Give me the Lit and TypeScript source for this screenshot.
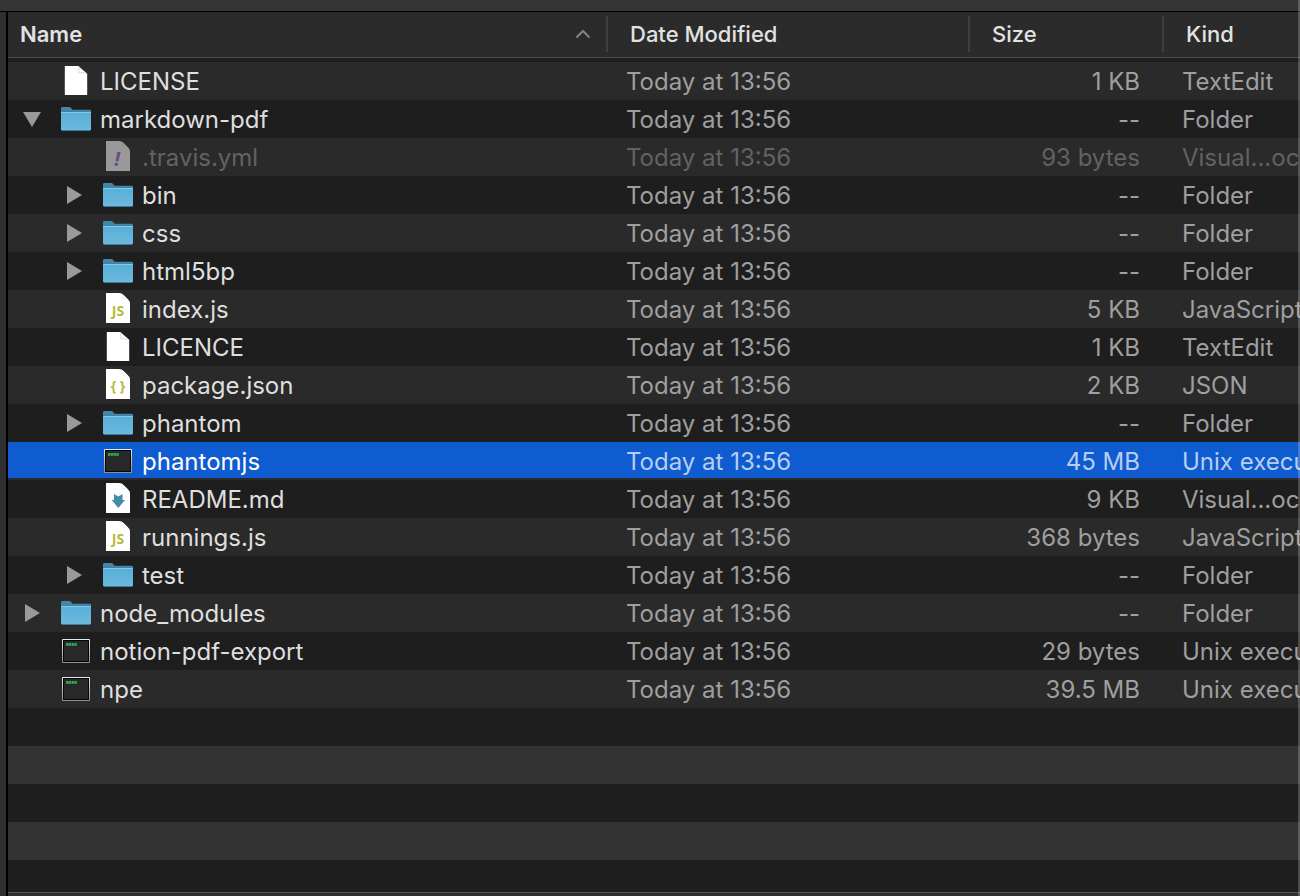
import { LitElement, html, svg, css, nothing } from "lit";
import { customElement, property, state } from "lit/decorators.js";
import { classMap } from "lit/directives/class-map.js";

type IconKind = "page" | "folder" | "yml" | "js" | "json" | "md" | "exec";

interface Entry {
  name: string;
  icon: IconKind;
  size: string;
  kind: string;
  parent?: string;
  hidden?: boolean;
}

const MODIFIED = "Today at 13:56";

const ENTRIES: Entry[] = [
  { name: "LICENSE", icon: "page", size: "1 KB", kind: "TextEdit" },
  { name: "markdown-pdf", icon: "folder", size: "--", kind: "Folder" },
  { name: ".travis.yml", icon: "yml", size: "93 bytes", kind: "Visual...ocument", parent: "markdown-pdf", hidden: true },
  { name: "bin", icon: "folder", size: "--", kind: "Folder", parent: "markdown-pdf" },
  { name: "css", icon: "folder", size: "--", kind: "Folder", parent: "markdown-pdf" },
  { name: "html5bp", icon: "folder", size: "--", kind: "Folder", parent: "markdown-pdf" },
  { name: "index.js", icon: "js", size: "5 KB", kind: "JavaScript", parent: "markdown-pdf" },
  { name: "LICENCE", icon: "page", size: "1 KB", kind: "TextEdit", parent: "markdown-pdf" },
  { name: "package.json", icon: "json", size: "2 KB", kind: "JSON", parent: "markdown-pdf" },
  { name: "phantom", icon: "folder", size: "--", kind: "Folder", parent: "markdown-pdf" },
  { name: "phantomjs", icon: "exec", size: "45 MB", kind: "Unix executable", parent: "markdown-pdf" },
  { name: "README.md", icon: "md", size: "9 KB", kind: "Visual...ocument", parent: "markdown-pdf" },
  { name: "runnings.js", icon: "js", size: "368 bytes", kind: "JavaScript", parent: "markdown-pdf" },
  { name: "test", icon: "folder", size: "--", kind: "Folder", parent: "markdown-pdf" },
  { name: "node_modules", icon: "folder", size: "--", kind: "Folder" },
  { name: "notion-pdf-export", icon: "exec", size: "29 bytes", kind: "Unix executable" },
  { name: "npe", icon: "exec", size: "39.5 MB", kind: "Unix executable" },
];

@customElement("file-icon")
export class FileIcon extends LitElement {
  @property() kind: IconKind = "page";

  static styles = css`
    :host {
      display: block;
      flex: none;
      width: 32px;
      height: 38px;
    }
    .art {
      display: block;
    }
    .glyph {
      font-family: "Noto Sans", sans-serif;
      font-weight: 700;
      text-anchor: middle;
    }
    .js {
      font-size: 14px;
      fill: #b9b93c;
    }
    .json {
      font-size: 14px;
      fill: #b9b93c;
    }
    .yml {
      font-size: 20px;
      font-style: italic;
      fill: #6d4c85;
    }
  `;

  private folder() {
    return svg`
      <defs>
        <linearGradient id="front" x1="0" y1="0" x2="0" y2="1">
          <stop offset="0" stop-color="#58afd9" />
          <stop offset="1" stop-color="#6cb9dc" />
        </linearGradient>
      </defs>
      <path d="M1 12V8.200Q1 7 2.200 7H9.400Q10.300 7 10.900 7.800L12 9.200Q12.400 9.800 13.200 9.800H30Q31 9.800 31 11V14H1Z" fill="#4486a8" />
      <path d="M1 11.500H31V29.600Q31 31 29.600 31H2.400Q1 31 1 29.600Z" fill="#3f7d9e" />
      <path d="M1 12.200H31V28.800Q31 30 29.800 30H2.200Q1 30 1 28.800Z" fill="url(#front)" />
      <path d="M1 12.500H31" stroke="#83cbea" stroke-width="1" />`;
  }

  private exec() {
    return svg`
      <defs>
        <linearGradient id="frame" x1="0" y1="0" x2="0" y2="1">
          <stop offset="0" stop-color="#dfeef3" />
          <stop offset="1" stop-color="#8c9090" />
        </linearGradient>
      </defs>
      <rect x="2" y="7" width="28" height="24" rx="1" fill="url(#frame)" />
      <rect x="3" y="8" width="26" height="22" fill="#050505" />
      <rect x="4" y="9" width="24" height="20" fill="#282828" />
      <path d="M6 12.500H16.700" stroke="#2e9a4b" stroke-width="2.800" stroke-dasharray="2.300 .5" />
      <path d="M6.500 12H16.700" stroke="#3cc25f" stroke-width="1" stroke-dasharray="1 .8" />`;
  }

  private page() {
    return svg`
      <path d="M4.800 4H18.300L27.200 11.800V33H4.800Z" fill="#fff" />
      <path d="M18.800 4.500V10.800H26" fill="none" stroke="#cfcfcf" stroke-width=".8" />`;
  }

  private codePage(kind: IconKind) {
    const dim = kind === "yml";
    return svg`
      <defs>
        <linearGradient id="fold" x1="0" y1="1" x2="1" y2="0">
          <stop offset="0" stop-color=${dim ? "#868686" : "#cfcfcf"} />
          <stop offset=".6" stop-color=${dim ? "#999" : "#fff"} />
        </linearGradient>
      </defs>
      <path d="M4 3H17Q20 3 22 5.500L26 9.500Q28 11.500 28 14V33H4Z" fill=${dim ? "#999" : "#fff"} />
      <path d="M17.500 3.200Q20 4 20 9.500Q26 9 28 13Q28 11.500 26 9.500L22 5.500Q20 3.200 17.500 3.200Z" fill="url(#fold)" />
      ${kind === "js" ? svg`<text class="glyph js" x="16" y="26">JS</text>` : nothing}
      ${kind === "json" ? svg`<text class="glyph json" x="16" y="25">{ }</text>` : nothing}
      ${kind === "yml" ? svg`<text class="glyph yml" x="15" y="28">!</text>` : nothing}
      ${kind === "md" ? svg`<path d="M12 14L16.300 16.500L20.500 14V20H23L16.300 28L9.700 20H12Z" fill="#468aaa" />` : nothing}`;
  }

  render() {
    const art =
      this.kind === "folder" ? this.folder()
      : this.kind === "exec" ? this.exec()
      : this.kind === "page" ? this.page()
      : this.codePage(this.kind);
    return html`<svg class="art" width="32" height="38" viewBox="0 0 32 38" aria-hidden="true">${art}</svg>`;
  }
}

@customElement("app-root")
export class AppRoot extends LitElement {
  @state() private open = new Set<string>(["markdown-pdf"]);
  @state() private selected = "phantomjs";

  static styles = css`
    :host {
      display: flex;
      flex-direction: column;
      position: relative;
      height: 100vh;
      overflow: hidden;
      background: #353535;
      color: #dfdfdf;
      font-family: Inter, "Liberation Sans", sans-serif;
      font-size: 24px;
      line-height: 36px;
    }
    :host::after {
      content: "";
      position: absolute;
      inset: 0 0 0 auto;
      width: 2px;
      background: rgba(255, 255, 255, 0.2);
    }
    .toolbar {
      flex: none;
      height: 11px;
      border-bottom: 1px solid #000;
    }
    .body {
      flex: 1;
      min-height: 0;
      display: flex;
    }
    .sidebar {
      flex: none;
      width: 6px;
      background: #2e3032;
      border-right: 2px solid #000;
    }
    .listing {
      flex: 1;
      min-width: 0;
      display: flex;
      flex-direction: column;
      background: #1e1e1e;
    }
    .files {
      flex: none;
      width: 100%;
      table-layout: fixed;
      border-spacing: 0;
    }
    .files tbody::before {
      content: "";
      display: block;
      height: 4px;
    }
    .col-date {
      width: 362px;
    }
    .col-size {
      width: 194px;
    }
    .col-kind {
      width: 136px;
    }
    th,
    td {
      padding: 0;
      text-align: left;
      font-weight: 400;
      white-space: nowrap;
      overflow: hidden;
    }
    th {
      padding: 4px 0 5px;
      background: #2b2b2b;
      border-bottom: 1px solid #4e4e4e;
    }
    .head {
      display: flex;
      align-items: center;
      justify-content: space-between;
      box-sizing: border-box;
      width: 100%;
      height: 36px;
      margin: 0;
      padding: 0 15px 0 22px;
      border: 0;
      border-right: 2px solid #404040;
      background: none;
      color: #e2e2e2;
      font: inherit;
      font-size: 22px;
      font-weight: 500;
      line-height: 36px;
    }
    .head.name {
      padding-left: 12px;
      font-weight: 600;
    }
    .head.last {
      border-right: 0;
    }
    .row {
      height: 38px;
    }
    .row:nth-child(odd) {
      background: #2a2a2a;
    }
    .date,
    .size,
    .type {
      padding-top: 2px;
      color: #9f9f9f;
    }
    .date {
      padding-left: 18px;
    }
    .size {
      padding-right: 24px;
      text-align: right;
    }
    .type {
      padding-left: 18px;
    }
    .row.hidden,
    .row.hidden .date,
    .row.hidden .size,
    .row.hidden .type {
      color: #626262;
    }
    .row.selected {
      background: linear-gradient(#0f5bd0 36px, #2a2a2a 36px);
      color: #fff;
    }
    .row.selected .date,
    .row.selected .size,
    .row.selected .type {
      color: #b7cef1;
    }
    .entry {
      display: flex;
      align-items: center;
      height: 38px;
      padding-left: 12px;
    }
    .entry.nested {
      padding-left: 54px;
    }
    .toggle,
    .spacer {
      flex: none;
      width: 24px;
      height: 24px;
      margin: 0 16px 0 0;
    }
    .toggle {
      padding: 0;
      border: 0;
      background: none;
    }
    .toggle svg {
      display: block;
    }
    .label {
      padding: 2px 0 0 8px;
    }
    .empty {
      flex: 1;
      background: repeating-linear-gradient(#1e1e1e 0 38px, #333 38px 76px);
    }
    .footer {
      flex: none;
      height: 3px;
      border-top: 1px solid #565656;
      background: #302e2f;
    }
  `;

  private toggle(name: string) {
    const next = new Set(this.open);
    if (!next.delete(name)) next.add(name);
    this.open = next;
  }

  private disclosure(entry: Entry) {
    if (entry.icon !== "folder") return html`<span class="spacer"></span>`;
    const open = this.open.has(entry.name);
    return html`<button
      class="toggle"
      aria-label=${entry.name}
      aria-expanded=${open}
      @click=${() => this.toggle(entry.name)}
    >
      <svg width="24" height="24" viewBox="0 0 24 24" aria-hidden="true">
        <path d=${open ? "M3 5H21L12 20Z" : "M5 3L20 12L5 21Z"} fill="#9a9a9a" />
      </svg>
    </button>`;
  }

  private row(entry: Entry) {
    const classes = { row: true, hidden: !!entry.hidden, selected: entry.name === this.selected };
    return html`<tr class=${classMap(classes)} @click=${() => (this.selected = entry.name)}>
      <td>
        <div class=${classMap({ entry: true, nested: !!entry.parent })}>
          ${this.disclosure(entry)}
          <file-icon .kind=${entry.icon}></file-icon>
          <span class="label">${entry.name}</span>
        </div>
      </td>
      <td class="date">${MODIFIED}</td>
      <td class="size">${entry.size}</td>
      <td class="type">${entry.kind}</td>
    </tr>`;
  }

  render() {
    const visible = ENTRIES.filter((e) => !e.parent || this.open.has(e.parent));
    return html`
      <div class="toolbar"></div>
      <div class="body">
        <div class="sidebar"></div>
        <main class="listing">
          <table class="files">
            <colgroup>
              <col />
              <col class="col-date" />
              <col class="col-size" />
              <col class="col-kind" />
            </colgroup>
            <thead>
              <tr>
                <th aria-sort="ascending">
                  <button class="head name">
                    Name
                    <svg width="16" height="16" viewBox="0 0 16 16" aria-hidden="true">
                      <path d="M1.500 11.500L8 5L14.500 11.500" fill="none" stroke="#858585" stroke-width="2" />
                    </svg>
                  </button>
                </th>
                <th><button class="head">Date Modified</button></th>
                <th><button class="head">Size</button></th>
                <th><button class="head last">Kind</button></th>
              </tr>
            </thead>
            <tbody>
              ${visible.map((e) => this.row(e))}
            </tbody>
          </table>
          <div class="empty"></div>
          <div class="footer"></div>
        </main>
      </div>
    `;
  }
}
